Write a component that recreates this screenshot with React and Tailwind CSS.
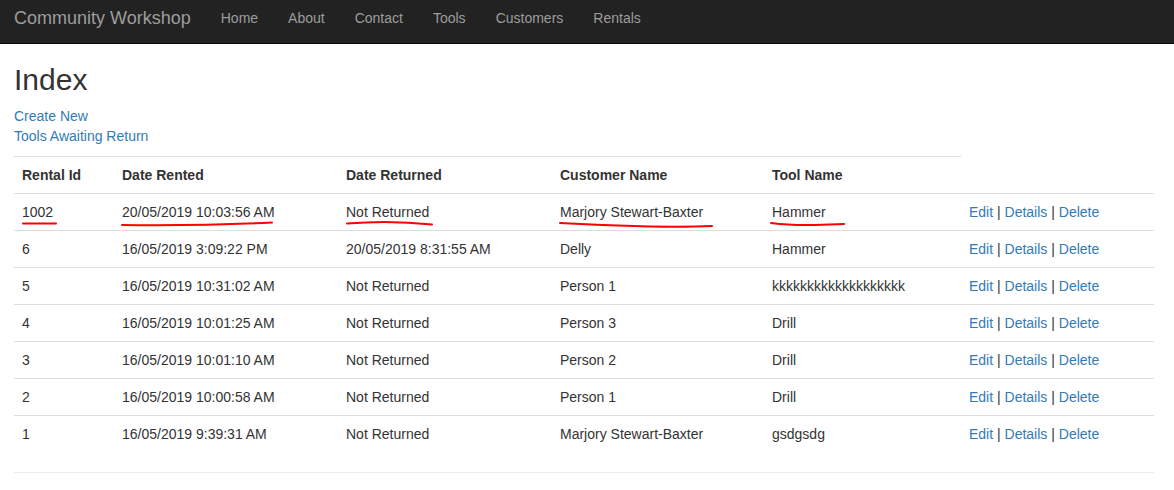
import React from 'react';

const navLinks = ['Home', 'About', 'Contact', 'Tools', 'Customers', 'Rentals'];

const rentals = [
    { id: '1002', rented: '20/05/2019 10:03:56 AM', returned: 'Not Returned', customer: 'Marjory Stewart-Baxter', tool: 'Hammer' },
    { id: '6', rented: '16/05/2019 3:09:22 PM', returned: '20/05/2019 8:31:55 AM', customer: 'Delly', tool: 'Hammer' },
    { id: '5', rented: '16/05/2019 10:31:02 AM', returned: 'Not Returned', customer: 'Person 1', tool: 'kkkkkkkkkkkkkkkkkkk' },
    { id: '4', rented: '16/05/2019 10:01:25 AM', returned: 'Not Returned', customer: 'Person 3', tool: 'Drill' },
    { id: '3', rented: '16/05/2019 10:01:10 AM', returned: 'Not Returned', customer: 'Person 2', tool: 'Drill' },
    { id: '2', rented: '16/05/2019 10:00:58 AM', returned: 'Not Returned', customer: 'Person 1', tool: 'Drill' },
    { id: '1', rented: '16/05/2019 9:39:31 AM', returned: 'Not Returned', customer: 'Marjory Stewart-Baxter', tool: 'gsdgsdg' },
];

const cell = 'px-2 py-2 leading-5 border-t border-[#ddd] text-left align-top';

export default function App() {
    return (
        <div className="relative min-h-[490px] bg-white text-[14px] leading-5 text-[#333] font-['Liberation_Sans',Arial,sans-serif]">
            {/* Navbar */}
            <nav className="h-[44px] bg-[#222] border-b border-[#080808] flex items-start pl-[14px]">
                <a className="pr-[15px] pt-[8px] text-[18px] leading-5 text-[#9d9d9d]">Community Workshop</a>
                <ul className="flex">
                    {navLinks.map(l => (
                        <li key={l}>
                            <a className="block px-[15px] pt-[8px] leading-5 text-[#9d9d9d]">{l}</a>
                        </li>
                    ))}
                </ul>
            </nav>

            <div className="px-[14px] w-[1168px]">
                <h2 className="mt-[19px] mb-[10px] text-[30px] leading-[33px] font-normal">Index</h2>
                <p className="mb-[10px] leading-5">
                    <a className="text-[#337ab7]">Create New</a>
                    <br />
                    <a className="text-[#337ab7]">Tools Awaiting Return</a>
                </p>

                <table className="w-[1140px] border-collapse mb-[20px]">
                    <tbody>
                        <tr className="font-bold">
                            <th className={`${cell} w-[100px]`}>Rental Id</th>
                            <th className={`${cell} w-[224px]`}>Date Rented</th>
                            <th className={`${cell} w-[214px]`}>Date Returned</th>
                            <th className={`${cell} w-[212px]`}>Customer Name</th>
                            <th className={`${cell} w-[197px]`}>Tool Name</th>
                        </tr>
                        {rentals.map(r => (
                            <tr key={r.id}>
                                <td className={cell}>{r.id}</td>
                                <td className={cell}>{r.rented}</td>
                                <td className={cell}>{r.returned}</td>
                                <td className={cell}>{r.customer}</td>
                                <td className={cell}>{r.tool}</td>
                                <td className={cell}>
                                    <a className="text-[#337ab7]">Edit</a> | <a className="text-[#337ab7]">Details</a> | <a className="text-[#337ab7]">Delete</a>
                                </td>
                            </tr>
                        ))}
                    </tbody>
                </table>
                <hr className="w-[1140px] border-t border-[#eee]" />
            </div>

            {/* hand-drawn red underlines over the first row */}
            <svg className="absolute left-0 top-0 pointer-events-none" width="1174" height="490">
                <g fill="none" stroke="#f00" strokeWidth="2" strokeLinecap="round">
                    <path d="M23 223.5 L56 223.5" />
                    <path d="M122 225 Q200 226 272 222.5" />
                    <path d="M347 223.5 Q390 220 432 224.5" />
                    <path d="M560 223 Q600 225 650 226.5 Q690 227 712 226" />
                    <path d="M771 223 Q790 225.5 815 225 L844 224" />
                </g>
            </svg>
        </div>
    );
}
